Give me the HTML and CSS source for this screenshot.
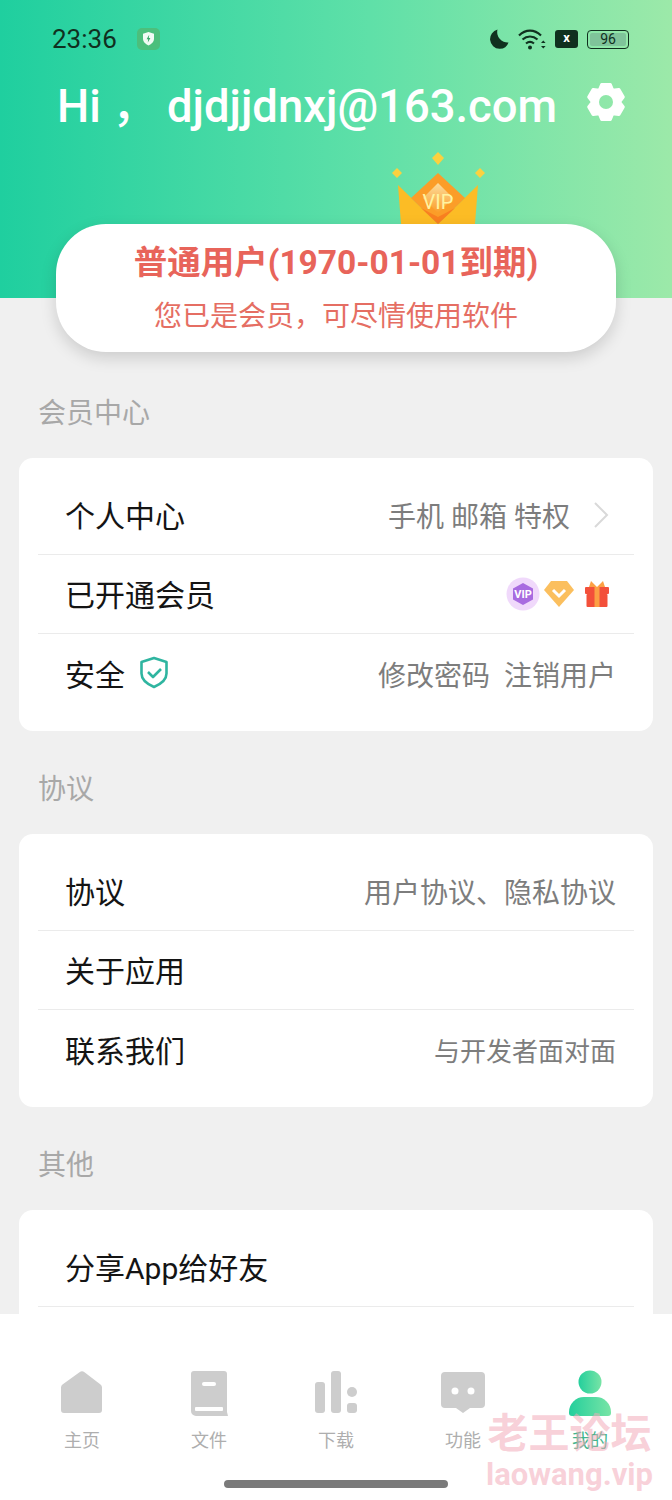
FILE: index.html
```html
<!DOCTYPE html>
<html lang="zh-CN">
<head>
    <meta charset="UTF-8">
    <title>我的</title>
    <link rel="stylesheet" href="styles.css">
</head>
<body>
<div class="screen">
    <div class="main">
        <div class="hero">
            <!-- status bar -->
            <div class="status">
                <span class="time">23:36</span>
                <svg class="shield-app" viewBox="0 0 23 22" width="23" height="22">
                    <rect x="0" y="0" width="23" height="22" rx="5" fill="#4cbf7c"/>
                    <path d="M11.500 4l5.500 1.800v5.200c0 3-2.400 5-5.500 6.500C8.400 16 6 14 6 11V5.800z" fill="#f2fbf4"/>
                    <path d="M12.200 6.800l-2.600 4.400h1.600l-.4 3.200 2.600-4.400h-1.600z" fill="#3aa868"/>
                </svg>
                <span class="status-right">
                    <svg width="19" height="20" viewBox="0 0 19 20"><path d="M7.500 .5A9.800 9.800 0 0 0 9.500 19.800a9.300 9.300 0 0 0 9-6.300A10.500 10.500 0 0 1 7.500 .5z" fill="#10301f"/></svg>
                    <svg width="28" height="22" viewBox="0 0 28 22" fill="none" stroke="#10301f" stroke-width="2.200">
                        <path d="M1 7.500C7.500 1 16.500 1 23 7.500"/>
                        <path d="M4.500 11.500c4.500-4 10.500-4 15 0"/>
                        <path d="M8 15.500c2.500-2 5.500-2 8 0"/>
                        <circle cx="12" cy="19.500" r="2" fill="#10301f" stroke="none"/>
                        <path d="M23 15l2.300-2.600 2.300 2.600zM23 18l2.300 2.600 2.300-2.600z" fill="#10301f" stroke="none"/>
                    </svg>
                    <span class="sim">x</span>
                    <span class="battery"><span class="battery-level">96</span></span>
                </span>
            </div>

            <div class="greeting">
                <h1 class="greeting-text"><span class="greeting-hi">Hi ，</span>djdjjdnxj@163.com</h1>
                <svg class="gear" viewBox="0 0 40 40" width="40" height="40">
                    <mask id="gear-hole">
                        <rect width="40" height="40" fill="#000"/>
                        <path fill="#fff" stroke="#fff" stroke-width="3" stroke-linejoin="round" d="M15.640 2.540H24.360L26.750 8.310 32.950 7.490 37.300 15.040 33.500 20 37.300 24.960 32.950 32.510 26.750 31.690 24.360 37.460H15.640L13.250 31.690 7.050 32.510 2.700 24.960 6.500 20 2.700 15.040 7.050 7.490 13.250 8.310z"/>
                        <circle cx="20" cy="20" r="7" fill="#000"/>
                    </mask>
                    <rect width="40" height="40" fill="#fff" mask="url(#gear-hole)"/>
                </svg>
            </div>

            <div class="member-card">
                <svg class="crown" viewBox="0 0 96 72" width="96" height="72">
                    <defs>
                        <linearGradient id="crown-inner" x1="0" y1="0" x2="0" y2="1">
                            <stop offset="0" stop-color="#fcdc9c"/>
                            <stop offset="1" stop-color="#fb9d28"/>
                        </linearGradient>
                    </defs>
                    <path d="M48 0l6 6-6 7-6-7z" fill="#fbd13f"/>
                    <path d="M7 16l5 5-5 5-5-5z" fill="#fbd13f"/>
                    <path d="M90 16l5 5-5 5-5-5z" fill="#fbd13f"/>
                    <path d="M8 33l40 39H11z" fill="#fcbc25"/>
                    <path d="M88 33L48 72h37z" fill="#fcbc25"/>
                    <path d="M48 21l27 25-27 26-27-26z" fill="#fb9d28"/>
                    <path d="M48 31l15 15-15 15-15-15z" fill="url(#crown-inner)"/>
                    <path d="M48 72L31 56l17 9 17-9z" fill="#f98020"/>
                    <text class="crown-text" x="48" y="57" text-anchor="middle">VIP</text>
                </svg>
                <div class="member-title">普通用户(1970-01-01到期)</div>
                <div class="member-sub">您已是会员，可尽情使用软件</div>
            </div>
        </div>

        <div class="section-title first">会员中心</div>
        <div class="card">
            <div class="row">
                <span class="row-label">个人中心</span>
                <span class="row-value">手机 邮箱 特权<svg class="chevron" width="18" height="28" viewBox="0 0 18 28" fill="none" stroke="#d9d9d9" stroke-width="2"><path d="M3 2l12 12L3 26"/></svg></span>
            </div>
            <div class="row">
                <span class="row-label">已开通会员</span>
                <span class="row-icons">
                    <svg width="34" height="34" viewBox="0 0 34 34">
                        <circle cx="17" cy="17" r="16.500" fill="#f0d9fb"/>
                        <path d="M17 6l10 5.500v11L17 28 7 22.500v-11z" fill="#a86be0"/>
                        <text class="vip-small" x="17" y="21" text-anchor="middle">VIP</text>
                    </svg>
                    <svg width="32" height="28" viewBox="0 0 32 28">
                        <path d="M8 1h16l7 9-15 17L1 10z" fill="#fbbf5e"/>
                        <path d="M10 10l6 6 6-6" fill="none" stroke="#fff" stroke-width="3"/>
                    </svg>
                    <svg class="gift" width="26" height="28" viewBox="0 0 26 28">
                        <path d="M7 1l6 6 6-6 2 6H5z" fill="#fca044"/>
                        <rect x="1" y="7" width="24" height="7" rx="1" fill="#f3503a"/>
                        <rect x="2.500" y="14" width="21" height="13" rx="1" fill="#f3503a"/>
                        <rect x="10.500" y="7" width="5" height="20" fill="#fca044"/>
                    </svg>
                </span>
            </div>
            <div class="row">
                <span class="row-label">安全<svg class="safe" width="30" height="33" viewBox="0 0 30 33" fill="none" stroke="#2fb5a0" stroke-width="2.600" stroke-linejoin="round">
                        <path d="M15 2l12.500 4v11.500c0 6.500-5.500 10.500-12.500 13.500C8 28 2.500 24 2.500 17.500V6z"/>
                        <path d="M9 16l5 5 8-8"/>
                    </svg></span>
                <span class="row-value">修改密码&nbsp; 注销用户</span>
            </div>
        </div>

        <div class="section-title">协议</div>
        <div class="card">
            <div class="row">
                <span class="row-label">协议</span>
                <span class="row-value">用户协议、隐私协议</span>
            </div>
            <div class="row">
                <span class="row-label">关于应用</span>
            </div>
            <div class="row">
                <span class="row-label">联系我们</span>
                <span class="row-value small">与开发者面对面</span>
            </div>
        </div>

        <div class="section-title">其他</div>
        <div class="card">
            <div class="row">
                <span class="row-label">分享App给好友</span>
            </div>
            <div class="row"></div>
        </div>
    </div>

    <!-- bottom nav -->
    <div class="tabbar">
        <div class="tab">
            <svg width="42" height="46" viewBox="0 0 42 46"><path d="M18.500 2.200a4 4 0 0 1 5 0l16 12.300a4 4 0 0 1 1.500 3V40a3 3 0 0 1-3 3H3a3 3 0 0 1-3-3V17.500a4 4 0 0 1 1.500-3z" fill="#cdcdcd"/></svg>
            <span>主页</span>
        </div>
        <div class="tab">
            <svg width="38" height="46" viewBox="0 0 38 46">
                <path d="M4 1h30a3 3 0 0 1 3 3v38l1 4H6a5 5 0 0 1-5-5V4a3 3 0 0 1 3-3z" fill="#cdcdcd"/>
                <rect x="12" y="12" width="14" height="4" rx="2" fill="#fff"/>
                <rect x="5" y="37" width="28" height="4" rx="1" fill="#fff"/>
            </svg>
            <span>文件</span>
        </div>
        <div class="tab">
            <svg width="42" height="46" viewBox="0 0 42 46">
                <rect x="0" y="12" width="10" height="31" rx="3" fill="#cdcdcd"/>
                <rect x="16" y="1" width="10" height="42" rx="3" fill="#cdcdcd"/>
                <circle cx="37" cy="22" r="5" fill="#cdcdcd"/>
                <rect x="32" y="33" width="10" height="10" rx="3" fill="#cdcdcd"/>
            </svg>
            <span>下载</span>
        </div>
        <div class="tab">
            <svg width="46" height="46" viewBox="0 0 46 46">
                <path d="M5 2h36a4 4 0 0 1 4 4v28a4 4 0 0 1-4 4H30l-7 5-7-5H5a4 4 0 0 1-4-4V6a4 4 0 0 1 4-4z" fill="#cdcdcd"/>
                <circle cx="15" cy="21" r="3.500" fill="#fff"/>
                <circle cx="31" cy="21" r="3.500" fill="#fff"/>
            </svg>
            <span>功能</span>
        </div>
        <div class="tab active">
            <svg width="42" height="46" viewBox="0 0 42 46">
                <defs>
                    <linearGradient id="me" x1="0" y1="0" x2="1" y2="0">
                        <stop offset="0" stop-color="#24cf9c"/>
                        <stop offset="1" stop-color="#78e4a6"/>
                    </linearGradient>
                </defs>
                <circle cx="21" cy="12" r="11.500" fill="url(#me)"/>
                <path d="M15 27h12a15 15 0 0 1 15 15v1a3 3 0 0 1-3 3H3a3 3 0 0 1-3-3v-1a15 15 0 0 1 15-15z" fill="url(#me)"/>
            </svg>
            <span>我的</span>
        </div>
        <div class="home-bar"></div>
    </div>

    <div class="watermark">
        <div class="wm-cn">老王论坛</div>
        <div class="wm-en">laowang.vip</div>
    </div>
</div>
</body>
</html>
```

FILE: styles.css
```css
* {
    box-sizing: border-box;
}

body {
    margin: 0;
    background-color: #f0f0f0;
    font-family: "Roboto", "Noto Sans CJK SC", sans-serif;
}

.screen {
    position: relative;
    width: 672px;
    height: 1500px;
    display: flex;
    flex-direction: column;
    overflow: hidden;
}

.main {
    height: 1314px;
    flex: none;
    overflow: hidden;
}

.hero {
    position: relative;
    z-index: 0;
    height: 298px;
    padding-top: 22px;
    background: linear-gradient(90deg, #1fcf9f 0%, #5fe0a8 55%, #9ce9a9 100%);
}

.status {
    display: flex;
    align-items: center;
    height: 34px;
    padding: 0 43px 0 52px;
}

.time {
    font-size: 26px;
    color: #10301f;
    width: 85px;
}

.status-right {
    margin-left: auto;
    display: flex;
    align-items: center;
    gap: 9px;
}

.sim {
    width: 23px;
    height: 18px;
    background-color: #10301f;
    border-radius: 3px;
    color: #fff;
    font-size: 13px;
    font-weight: 700;
    line-height: 16px;
    text-align: center;
}

.battery {
    width: 42px;
    height: 19px;
    padding: 2px;
    border: 1.500px solid #10301f;
    border-radius: 4px;
    display: block;
}

.battery-level {
    display: block;
    height: 100%;
    background-color: #7fc49a;
    border-radius: 2px;
    color: #10301f;
    font-size: 14px;
    line-height: 13px;
    text-align: center;
}

.greeting {
    display: flex;
    align-items: flex-start;
    height: 54px;
    margin-top: 24px;
    padding: 0 46px 0 57px;
    justify-content: space-between;
}

.greeting-text {
    margin: 0;
    color: #fff;
    font-size: 45.400px;
    font-weight: 500;
    line-height: 54px;
    white-space: nowrap;
}

.greeting-hi {
    display: inline-block;
    width: 110px;
}

.gear {
    margin-top: 2px;
}

.member-card {
    position: relative;
    width: 560px;
    height: 128px;
    margin: 90px 0 0 56px;
    background-color: #fff;
    border-radius: 50px;
    box-shadow: 0 6px 16px rgba(0, 0, 0, 0.15);
    text-align: center;
}

.crown {
    position: absolute;
    left: 334px;
    top: -72px;
    z-index: -1;
}

.crown-text {
    font-family: "Roboto", sans-serif;
    font-size: 20px;
    fill: #fff3a0;
}

.member-title {
    padding-top: 16px;
    color: #e8645a;
    font-size: 33.500px;
    font-weight: 700;
    line-height: 46px;
}

.member-sub {
    margin-top: 11px;
    color: #e56e63;
    font-size: 28px;
    line-height: 40px;
}

.section-title {
    height: 36px;
    margin: 41px 0 26px 38px;
    color: #a8a8a8;
    font-size: 28px;
    line-height: 36px;
}

.section-title.first {
    margin-top: 98px;
}

.card {
    margin: 0 19px;
    padding: 18px 19px;
    background-color: #fff;
    border-radius: 14px;
}

.row {
    display: flex;
    align-items: center;
    justify-content: space-between;
    height: 79px;
    padding: 0 18px 0 27px;
    border-bottom: 1px solid #ebebeb;
}

.row:last-child {
    border-bottom: none;
}

.row-label {
    display: flex;
    align-items: center;
    gap: 14px;
    padding-bottom: 2px;
    color: #141414;
    font-size: 30px;
}

.row-value {
    display: flex;
    align-items: center;
    gap: 22px;
    color: #7d7d7d;
    font-size: 28px;
}

.row-value.small {
    font-size: 26px;
}

.chevron {
    margin-right: 6px;
}

.row-icons {
    display: flex;
    align-items: center;
    gap: 3px;
    margin-right: 6px;
}

.gift {
    margin-left: 6px;
}

.vip-small {
    font-family: "Roboto", sans-serif;
    font-size: 11px;
    font-weight: 700;
    fill: #fff;
}

.tabbar {
    position: relative;
    flex: 1;
    display: flex;
    justify-content: space-between;
    padding: 56px 32px 0;
    background-color: #fff;
}

.tab {
    width: 100px;
    display: flex;
    flex-direction: column;
    align-items: center;
    color: #aeaeae;
    font-size: 18px;
}

.tab span {
    margin-top: 10px;
}

.tab.active {
    color: #3fb58d;
}

.home-bar {
    position: absolute;
    left: 224px;
    bottom: 12px;
    width: 224px;
    height: 8px;
    background-color: #7a7a7a;
    border-radius: 4px;
}

.watermark {
    position: absolute;
    right: 19px;
    bottom: 8px;
    text-align: center;
    color: rgba(242, 170, 185, 0.55);
    font-weight: 700;
}

.wm-cn {
    font-size: 41px;
    line-height: 48px;
}

.wm-en {
    font-size: 31px;
    line-height: 34px;
}
```
